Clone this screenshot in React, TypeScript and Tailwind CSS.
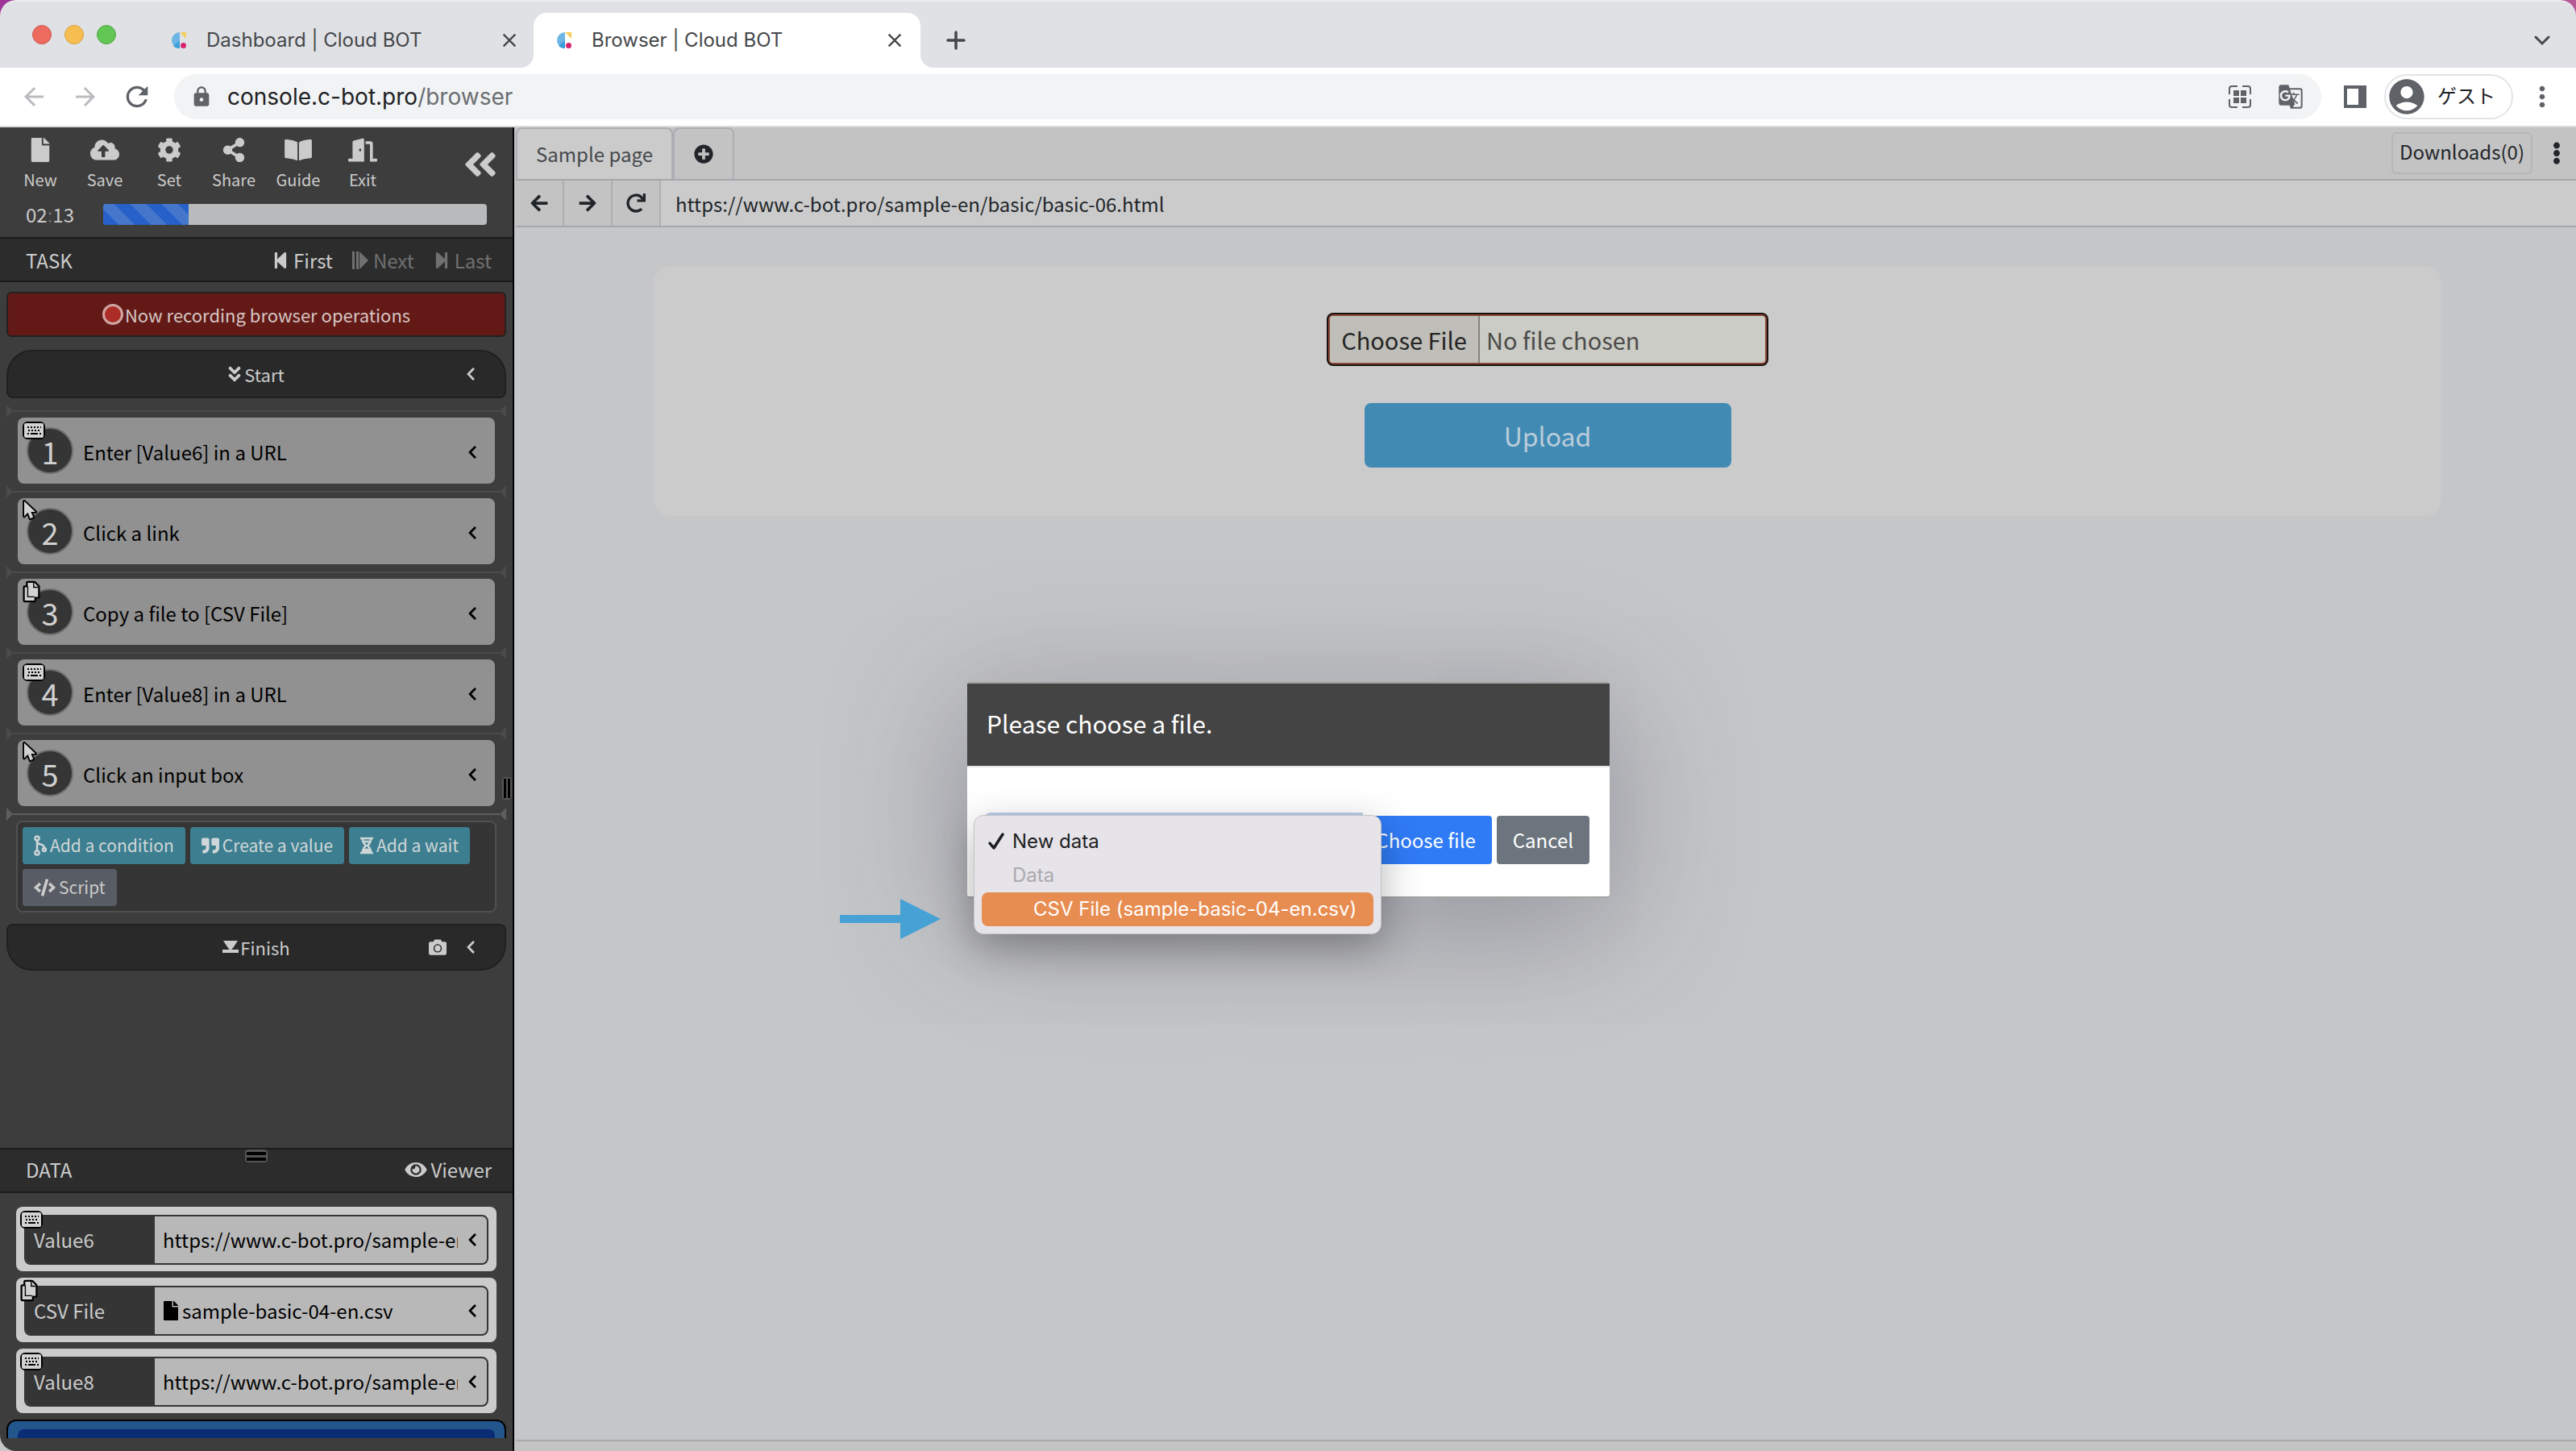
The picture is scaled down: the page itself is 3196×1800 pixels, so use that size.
import type { ComponentType, ReactNode } from "react";
import {
  FaAngleDoubleDown,
  FaAngleDoubleLeft,
  FaArrowLeft,
  FaArrowRight,
  FaBookOpen,
  FaCamera,
  FaChevronLeft,
  FaCloudUploadAlt,
  FaCode,
  FaCog,
  FaCopy,
  FaDoorOpen,
  FaEllipsisV,
  FaEye,
  FaFile,
  FaKeyboard,
  FaMousePointer,
  FaPlusCircle,
  FaQuoteRight,
  FaRedo,
  FaShareAlt,
  FaStepBackward,
  FaStepForward,
} from "react-icons/fa";
import { MdAccountCircle, MdArrowBack, MdArrowForward, MdClose, MdGTranslate, MdLock, MdMoreVert, MdRefresh } from "react-icons/md";

type Icon = ComponentType<{ className?: string }>;

const menu: { label: string; icon: Icon }[] = [
  { label: "New", icon: FaFile },
  { label: "Save", icon: FaCloudUploadAlt },
  { label: "Set", icon: FaCog },
  { label: "Share", icon: FaShareAlt },
  { label: "Guide", icon: FaBookOpen },
  { label: "Exit", icon: FaDoorOpen },
];

const steps: { text: string; icon: Icon }[] = [
  { text: "Enter [Value6] in a URL", icon: FaKeyboard },
  { text: "Click a link", icon: FaMousePointer },
  { text: "Copy a file to [CSV File]", icon: FaCopy },
  { text: "Enter [Value8] in a URL", icon: FaKeyboard },
  { text: "Click an input box", icon: FaMousePointer },
];

const values = [
  { name: "Value6", value: "https://www.c-bot.pro/sample-en", icon: FaKeyboard, file: false },
  { name: "CSV File", value: "sample-basic-04-en.csv", icon: FaCopy, file: true },
  { name: "Value8", value: "https://www.c-bot.pro/sample-en", icon: FaKeyboard, file: false },
];

function Favicon() {
  return (
    <svg viewBox="0 0 20 20" className="h-5 w-5 shrink-0">
      <path d="M11 0A10 10 0 0 0 11 20Z" fill="#6db5e4" />
      <path d="M11 10 3 17A10 10 0 0 0 11 20Z" fill="#3d9fda" />
      <path d="M11 0h8v8Z" fill="#f5cd5b" />
      <circle cx="15.5" cy="16.5" r="3.5" fill="#d6246e" />
    </svg>
  );
}

function TabFoot({ side }: { side: "left" | "right" }) {
  return (
    <svg viewBox="0 0 16 16" className="h-4 w-4 shrink-0 self-end" fill="#fff">
      {side === "left" ? <path d="M16 0v16H0A16 16 0 0 0 16 0Z" /> : <path d="M0 0v16h16A16 16 0 0 1 0 0Z" />}
    </svg>
  );
}

function TabStrip() {
  return (
    <div className="bg-gradient-to-r from-[#a03598] to-[#b55a94]">
      <header className="flex h-[84px] items-end rounded-t-[20px] border-t-2 border-[#eceef0] bg-[#dfe1e5] pr-8 text-[24px] text-[#45474a]">
        <div className="flex gap-4 self-center pl-10">
          <span className="h-6 w-6 rounded-full border border-[#d0544a] bg-[#ed6a5f]" />
          <span className="h-6 w-6 rounded-full border border-[#d8a03a] bg-[#f6be50]" />
          <span className="h-6 w-6 rounded-full border border-[#50a73e] bg-[#62c655]" />
        </div>
        <div className="flex h-[68px] w-[502px] items-center pl-[68px]">
          <Favicon />
          <span className="ml-6 flex-1">Dashboard | Cloud BOT</span>
          <button aria-label="Close tab">
            <MdClose className="h-7 w-7" />
          </button>
        </div>
        <TabFoot side="left" />
        <div className="flex h-[68px] w-[480px] items-center rounded-t-2xl bg-white pl-7">
          <Favicon />
          <span className="ml-6 flex-1">Browser | Cloud BOT</span>
          <button aria-label="Close tab" className="mr-[18px]">
            <MdClose className="h-7 w-7" />
          </button>
        </div>
        <TabFoot side="right" />
        <button aria-label="New tab" className="ml-4 flex h-[68px] items-center">
          <svg viewBox="0 0 24 24" className="h-6 w-6" stroke="currentColor" strokeWidth="3.5" strokeLinecap="round">
            <path d="M12 2v20M2 12h20" />
          </svg>
        </button>
        <button aria-label="Search tabs" className="ml-auto flex h-[68px] items-center">
          <svg viewBox="0 0 20 14" className="h-[14px] w-5" fill="none" stroke="currentColor" strokeWidth="3" strokeLinecap="round">
            <path d="M2 3l8 8 8-8" />
          </svg>
        </button>
      </header>
    </div>
  );
}

function AddressBar() {
  return (
    <div className="flex h-[74px] items-center border-b-2 border-[#dadbdd] bg-white pl-6 pr-[22px] text-[#5f6368]">
      <button aria-label="Back" className="text-[#b9bbbe]">
        <MdArrowBack className="h-9 w-9" />
      </button>
      <button aria-label="Forward" className="ml-7 text-[#b9bbbe]">
        <MdArrowForward className="h-9 w-9" />
      </button>
      <button aria-label="Reload" className="ml-[26px]">
        <MdRefresh className="h-10 w-10" />
      </button>
      <div className="ml-[26px] flex h-14 flex-1 items-center rounded-full bg-[#f1f3f4] pl-5 pr-[22px]">
        <MdLock className="h-7 w-7" />
        <a href="#address" className="ml-[18px] flex-1 text-[28px] text-[#6b6e72]">
          <span className="text-[#202124]">console.c-bot.pro</span>/browser
        </a>
        <button aria-label="QR code">
          <svg viewBox="0 0 30 30" className="h-[30px] w-[30px]">
            <path d="M2 12V5a3 3 0 0 1 3-3h7M18 2h7a3 3 0 0 1 3 3v7M28 18v7a3 3 0 0 1-3 3h-7M12 28H5a3 3 0 0 1-3-3v-7" fill="none" stroke="currentColor" strokeWidth="2" />
            <path d="M7 7h7v7H7zM16 7h7v7h-7zM7 16h7v7H7zM16 16h7v7h-7z" fill="currentColor" />
          </svg>
        </button>
        <button aria-label="Translate" className="ml-8">
          <MdGTranslate className="h-8 w-8" />
        </button>
      </div>
      <button aria-label="Side panel" className="ml-7">
        <svg viewBox="0 0 28 28" className="h-7 w-7">
          <path d="M0 0h28v28H0zM4 4v20h14V4z" fill="currentColor" fillRule="evenodd" />
        </svg>
      </button>
      <button className="ml-[22px] flex h-14 w-40 items-center rounded-full border-2 border-[#e3e4e6] text-[24px] text-[#202124]">
        <MdAccountCircle className="h-[52px] w-[52px] text-[#5f6368]" />
        <span className="ml-3">ゲスト</span>
      </button>
      <button aria-label="Chrome menu" className="ml-4">
        <MdMoreVert className="h-10 w-10" />
      </button>
    </div>
  );
}

function Separator({ bright = false }: { bright?: boolean }) {
  return (
    <div className={`flex h-4 items-center ${bright ? "text-[#5e5e5e]" : "text-[#4b4b4b]"}`}>
      <svg viewBox="0 0 8 16" className="h-4 w-2" fill="currentColor">
        <path d="M0 0 8 8 0 16Z" />
      </svg>
      <span className="h-[2px] flex-1 bg-current" />
      <svg viewBox="0 0 8 16" className="h-4 w-2" fill="currentColor">
        <path d="M8 0 0 8 8 16Z" />
      </svg>
    </div>
  );
}

// Small light glyph with a black outline, pinned to a card's corner
function OutlinedIcon({ icon: IconTag }: { icon: Icon }) {
  if (IconTag === FaMousePointer) {
    return (
      <svg viewBox="-2 -2 19 30" className="h-7 w-[18px]">
        <path d="M0 0v20l5-5 3 8 4-2-3-7h6Z" fill="#d2d2d2" stroke="#000" strokeWidth="4" strokeLinejoin="round" paintOrder="stroke" />
      </svg>
    );
  }
  if (IconTag === FaCopy) {
    return (
      <svg viewBox="0 0 24 30" className="h-7 w-[22px]">
        <path d="M3 9h4V3h9l5 5v14h-5v5H3Z" fill="#d2d2d2" stroke="#000" strokeWidth="5" strokeLinejoin="round" paintOrder="stroke" />
        <path d="M7 8v14h9M15 3v6h6" fill="none" stroke="#000" strokeWidth="1.5" />
      </svg>
    );
  }
  return (
    <span className="flex rounded-md border-2 border-black bg-black">
      <svg viewBox="0 0 24 18" className="h-[18px] w-6">
        <rect width="24" height="18" rx="2" fill="#d2d2d2" />
        <path d="M4 5h17M5 9h15" stroke="#000" strokeWidth="2" strokeDasharray="2 2" />
        <path d="M4 13h2M8 13h9M19 13h2" stroke="#000" strokeWidth="2" />
      </svg>
    </span>
  );
}

function StepCard({ index, text, icon }: { index: number; text: string; icon: Icon }) {
  return (
    <div className="relative mx-[14px] flex h-[82px] items-center rounded-lg bg-[#919191] pl-[11px] pr-[22px] text-black">
      <span className="flex h-[58px] w-[58px] items-center justify-center rounded-full border-2 border-[#6f6f6f] bg-[#353535] text-[38px] text-[#d0d0d0]">
        {index}
      </span>
      <span className="absolute left-[6px] top-0 flex h-8 items-center">
        <OutlinedIcon icon={icon} />
      </span>
      <span className="ml-3 flex-1 pt-1">{text}</span>
      <button aria-label="Open step" className="pt-1">
        <FaChevronLeft className="h-[18px] w-3" />
      </button>
    </div>
  );
}

function ToolButton({ children }: { children: ReactNode }) {
  return (
    <button className="flex h-[46px] items-center gap-1 rounded bg-[#3d7f90] px-[14px] text-[21px] text-[#cfd6d8]">{children}</button>
  );
}

function DataRow({ name, value, icon, file }: (typeof values)[number]) {
  return (
    <li className="relative h-20 rounded-lg bg-[#cbcbcb] px-[10px] pb-2 pt-[10px]">
      <div className="flex h-full items-stretch overflow-hidden rounded-lg border-2 border-[#353535] bg-[#b8b8b8]">
        <span className="flex w-40 items-center bg-[#353535] pl-[10px] text-[#cbcbcb]">{name}</span>
        <span className="ml-[10px] flex w-[366px] items-center gap-1 overflow-hidden whitespace-nowrap text-black">
          {file && <FaFile className="h-6 w-5 shrink-0" />}
          {value}
        </span>
        <button aria-label={`Open ${name}`} className="ml-3 text-black">
          <FaChevronLeft className="h-[18px] w-3" />
        </button>
      </div>
      <span className="absolute left-[5px] top-0 flex h-8 items-center">
        <OutlinedIcon icon={icon} />
      </span>
    </li>
  );
}

function Sidebar() {
  return (
    <aside className="flex w-[638px] shrink-0 flex-col overflow-hidden rounded-bl-[20px] border-r-2 border-black bg-[#3d3d3d] text-[24px] text-[#cbcbcb]">
      <div className="flex h-[134px] shrink-0 flex-col">
        <div className="flex h-[86px] items-center pl-[10px] pr-[18px] pt-[6px]">
          {menu.map(({ label, icon: IconTag }) => (
            <button key={label} className="flex w-20 flex-col items-center text-[20px] leading-7">
              <IconTag className="mb-2 h-[30px] w-9" />
              {label}
            </button>
          ))}
          <button aria-label="Collapse sidebar" className="ml-auto">
            <FaAngleDoubleLeft className="h-12 w-11" />
          </button>
        </div>
        <div className="flex h-[44px] items-center pl-8 pr-8">
          <span className="w-24">
            02<span className="text-[#6a6a6a]">:</span>13
          </span>
          <div role="progressbar" aria-label="Time used" className="h-[26px] flex-1 overflow-hidden rounded bg-[#b9babc]">
            <div className="h-full w-[106px] bg-[#2660c8] bg-[repeating-linear-gradient(45deg,#2660c8_0_14px,#4477cc_14px_28px)]" />
          </div>
        </div>
      </div>

      <div className="mt-[2px] flex h-14 shrink-0 items-center border-y-2 border-[#1c1c1c] bg-[#2c2c2c] pl-8 pr-[26px] pt-[2px]">
        <h2 className="flex-1">TASK</h2>
        <button className="flex items-center gap-[6px]">
          <FaStepBackward className="h-[26px] w-5" />
          First
        </button>
        <button className="ml-6 flex items-center gap-[6px] text-[#707070]">
          <svg viewBox="0 0 20 24" className="h-6 w-5" fill="currentColor">
            <path d="M0 1h3v22H0zM5 1h3v22H5zM9 1l11 11L9 23z" />
          </svg>
          Next
        </button>
        <button className="ml-6 flex items-center gap-[6px] text-[#707070]">
          <FaStepForward className="h-[26px] w-5" />
          Last
        </button>
      </div>

      <div className="flex-1 px-2 pt-3">
        <div className="flex h-14 items-center justify-center rounded-md border-2 border-[#262020] bg-[#631a16] text-[22px] text-[#d6c6c5]">
          <span className="mr-[2px] h-[26px] w-[26px] rounded-full border-[3px] border-[#cfa5a3] bg-[#ac2d27]" />
          Now recording browser operations
        </div>
        <div className="mt-4 flex h-[60px] items-center rounded-b-lg rounded-t-[32px] border-2 border-[#202020] bg-[#292929] pl-9 pr-9 text-[22px]">
          <span className="flex flex-1 items-center justify-center gap-1 pl-3">
            <FaAngleDoubleDown className="h-6 w-4" />
            Start
          </span>
          <button aria-label="Open start">
            <FaChevronLeft className="h-[18px] w-3" />
          </button>
        </div>
        <ol className="mt-2">
          {steps.map((step, i) => (
            <li key={step.text} className="mb-[2px]">
              <Separator />
              <StepCard index={i + 1} {...step} />
            </li>
          ))}
        </ol>
        <Separator bright />
        <div className="mx-3 flex flex-wrap content-start gap-[6px] rounded-lg border-2 border-[#505050] bg-[#353535] p-[6px]">
          <ToolButton>
            <svg viewBox="0 0 16 26" className="h-[26px] w-4" fill="none" stroke="currentColor" strokeWidth="2.5">
              <circle cx="4" cy="4" r="2.5" />
              <circle cx="4" cy="22" r="2.5" />
              <circle cx="13" cy="18" r="2" />
              <path d="M4 6v14M4 8c1 5 9 2 9 8" />
            </svg>
            Add a condition
          </ToolButton>
          <ToolButton>
            <FaQuoteRight className="h-6 w-[22px]" />
            Create a value
          </ToolButton>
          <ToolButton>
            <svg viewBox="0 0 16 22" className="h-[22px] w-4" fill="none" stroke="currentColor" strokeWidth="2.5">
              <path d="M0 2h16M0 20h16M3 3c0 5 2 6 4 8-2 2-4 3-4 8M13 3c0 5-2 6-4 8 2 2 4 3 4 8" />
              <path d="M4 18c1-3 7-3 8 0zM5 6h6" />
            </svg>
            Add a wait
          </ToolButton>
          <button className="flex h-[46px] items-center gap-1 rounded bg-[#585c64] px-[14px] text-[21px]">
            <FaCode className="h-6 w-[27px]" />
            Script
          </button>
        </div>
        <div className="mt-[14px] flex h-[58px] items-center rounded-b-[32px] rounded-t-lg border-2 border-[#202020] bg-[#292929] pl-9 pr-9 text-[22px]">
          <span className="flex flex-1 items-center justify-center gap-[2px] pl-[58px]">
            <svg viewBox="0 0 20 16" className="h-4 w-5" fill="currentColor">
              <path d="M1 0h18l-6 9-2 2h9v4H0v-4h9L7 9z" />
            </svg>
            Finish
          </span>
          <button aria-label="Screenshot" className="mr-6">
            <FaCamera className="h-[22px] w-[22px]" />
          </button>
          <button aria-label="Open finish">
            <FaChevronLeft className="h-[18px] w-3" />
          </button>
        </div>
      </div>

      <div className="relative flex h-14 shrink-0 items-center border-y-2 border-[#1c1c1c] bg-[#2c2c2c] pb-[2px] pl-8 pr-[26px]">
        <h2 className="flex-1">DATA</h2>
        <button className="flex items-center gap-1">
          <FaEye className="h-6 w-7" />
          Viewer
        </button>
        <span className="absolute left-1/2 top-0 flex h-4 w-7 -translate-x-1/2 flex-col justify-center gap-[3px] rounded-sm bg-[#555] p-[2px]">
          <span className="h-1 bg-black" />
          <span className="h-1 bg-black" />
        </span>
      </div>
      <div className="mb-4 h-[304px] shrink-0 overflow-hidden px-2 pt-[17px]">
        <ul className="mx-3 flex flex-col gap-2">
          {values.map((row) => (
            <DataRow key={row.name} {...row} />
          ))}
        </ul>
        <div className="mt-2 h-12 rounded-t-xl border-2 border-black bg-[#22568d] px-3 pt-[10px]">
          <div className="h-9 rounded-t-lg bg-[#0a2c74]" />
        </div>
      </div>
    </aside>
  );
}

function FileDialog() {
  return (
    <div
      role="dialog"
      aria-label="Please choose a file."
      className="absolute left-[1200px] top-[846px] h-[268px] w-[797px] rounded border-y-2 border-[#a2a4a4] bg-white font-['Noto_Sans_CJK_JP',sans-serif] text-[24px] shadow-[0_30px_160px_10px_rgba(60,60,80,0.35)]"
    >
      <h1 className="flex h-[104px] items-center border-b-2 border-[#e5e4ea] bg-[#444] pb-1 pl-6 text-[30px] text-white">Please choose a file.</h1>
      <div className="flex items-center px-[25px] pt-[60px] text-white">
        <select aria-label="Data" className="h-[60px] min-w-0 flex-1 rounded-l border border-[#8fb6f0] bg-white pl-3 text-black ring-4 ring-[#bacdec]">
          <option>New data</option>
          <optgroup label="Data">
            <option>CSV File (sample-basic-04-en.csv)</option>
          </optgroup>
        </select>
        <button className="z-10 h-[60px] shrink-0 rounded bg-[#2f7bf6] px-5">Choose file</button>
        <button className="ml-[6px] h-[60px] shrink-0 rounded bg-[#6c757d] px-5">Cancel</button>
      </div>
      <ul
        role="listbox"
        aria-label="Data options"
        className="absolute left-[8px] top-[163px] z-20 flex h-[148px] w-[506px] flex-col rounded-xl border border-[#c3c2c6] bg-[#e6e4e9] px-[9px] pt-[11px] font-['Inter','Noto_Sans_CJK_JP',sans-serif] text-[24px] text-[#1d1d1f] shadow-[0_16px_50px_rgba(0,0,0,0.3)]"
      >
        <li role="option" aria-selected="true" className="flex h-[42px] items-center pl-2">
          <svg viewBox="0 0 20 22" className="mr-[10px] h-[22px] w-5" fill="none" stroke="currentColor" strokeWidth="3.5" strokeLinecap="round" strokeLinejoin="round">
            <path d="M2 13l5 6L18 2" />
          </svg>
          New data
        </li>
        <li role="presentation" className="flex h-[42px] items-center pl-[38px] text-[#aaa9ae]">Data</li>
        <li role="option" aria-selected="false" className="flex h-[42px] items-center rounded-lg bg-[#e88d52] pl-16 text-white">
          CSV File (sample-basic-04-en.csv)
        </li>
      </ul>
    </div>
  );
}

export default function App() {
  return (
    <div className="relative flex h-screen flex-col overflow-hidden bg-[#c5c6c8] font-['Inter','Noto_Sans_CJK_JP',sans-serif]">
      <TabStrip />
      <AddressBar />
      <div className="flex min-h-0 flex-1 font-['Noto_Sans_CJK_JP',sans-serif]">
        <Sidebar />
        <main className="flex flex-1 flex-col bg-[#c5c6c8] pl-[2px] text-[#212529]">
          <div className="flex h-[66px] items-end border-b-2 border-[#a6a7ac] bg-[#c3c3c3] text-[24px]">
            <button className="h-16 w-[195px] rounded-t-lg border-2 border-b-0 border-[#acaeb2] bg-[#cbcbcb] text-[#45484c]">Sample page</button>
            <button aria-label="Add tab" className="flex h-16 w-[76px] items-center justify-center rounded-t-lg border-2 border-b-0 border-[#acaeb2]">
              <FaPlusCircle className="h-6 w-6" />
            </button>
            <button className="mb-[6px] ml-auto h-[52px] rounded-md border-2 border-[#b5b6bb] px-2 pb-1">Downloads(0)</button>
            <button aria-label="More" className="mb-[18px] ml-[18px] mr-3">
              <FaEllipsisV className="h-7 w-6" />
            </button>
          </div>
          <div className="flex h-[58px] items-stretch border-b-2 border-[#a6a7ac] bg-[#cbcbcb]">
            {[FaArrowLeft, FaArrowRight, FaRedo].map((IconTag, i) => (
              <button key={i} aria-label={["Back", "Forward", "Reload"][i]} className="flex w-[60px] items-center justify-center border-r-2 border-[#acaeb2] bg-[#c3c3c3]">
                <IconTag className="h-6 w-6" />
              </button>
            ))}
            <input
              aria-label="URL"
              readOnly
              defaultValue="https://www.c-bot.pro/sample-en/basic/basic-06.html"
              className="flex-1 bg-transparent pl-[18px] pt-[2px] text-[24px] outline-none"
            />
          </div>
          <div className="flex justify-center pl-1 pt-12">
            <section className="flex h-[310px] w-[2218px] max-w-full flex-col items-center rounded-[20px] bg-[#cbcbcb] pt-[60px]">
              <input
                type="file"
                aria-label="File"
                className="h-[62px] w-[544px] rounded-md border-2 border-[#8c4a38] bg-[#cbccc5] text-[29px] leading-[56px] text-[#4b4b49] ring-2 ring-[#18100d] file:mr-2 file:h-[58px] file:w-[186px] file:border-r-2 file:border-[#85857f] file:bg-[#bfbeb8] file:text-[#242424]"
              />
              <button className="mt-12 h-20 w-[455px] rounded-lg bg-[#418ab4] text-[32px] text-[#b9cdd9]">Upload</button>
            </section>
          </div>
          <div className="mt-auto h-[14px] border-t-2 border-[#a9a9ae] bg-[#c3c3c3]" />
        </main>
      </div>
      <FileDialog />
      <svg viewBox="0 0 125 50" className="absolute left-[1042px] top-[1115px] h-[50px] w-[125px]" fill="#46a2d4">
        <path d="M0 20h75V0l50 25-50 25V30H0z" />
      </svg>
      <span className="absolute left-[623px] top-[964px] flex h-7 w-3 justify-between rounded-sm bg-[#555] p-[2px]">
        <span className="w-[3px] bg-black" />
        <span className="w-[3px] bg-black" />
      </span>
    </div>
  );
}
